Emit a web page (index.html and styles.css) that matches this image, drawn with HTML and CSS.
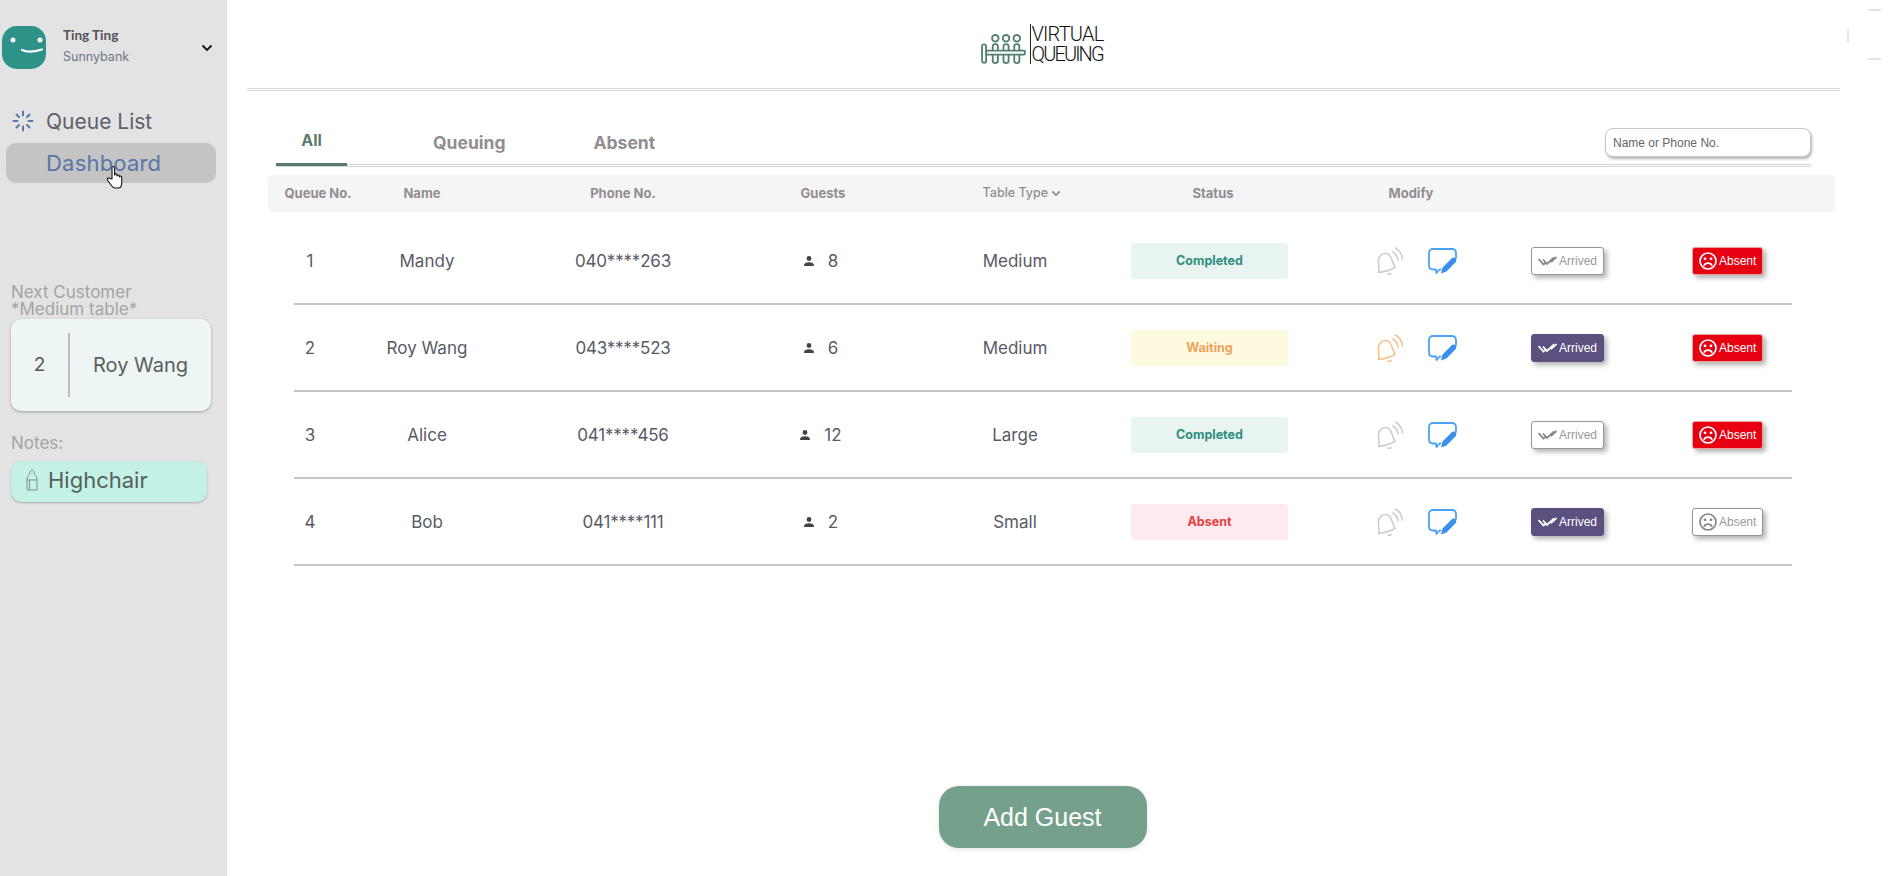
FILE: index.html
```html
<!DOCTYPE html>
<html lang="en">
<head>
    <meta charset="UTF-8">
    <title>Virtual Queuing</title>
    <link rel="stylesheet" href="styles.css">
</head>
<body>

<!-- Icons -->
<svg class="icon-defs" aria-hidden="true">
    <symbol id="i-person" viewBox="0 0 24 24">
        <path fill="currentColor" d="M12 12a4.200 4.200 0 1 0 0-8.400a4.200 4.200 0 0 0 0 8.400zm0 2.100c-2.800 0-8.400 1.400-8.400 4.200v2.100h16.800v-2.100c0-2.800-5.600-4.200-8.400-4.200z"/>
    </symbol>
    <symbol id="i-bell" viewBox="0 0 27 28">
        <g fill="none" stroke="currentColor" stroke-width="1.600" stroke-linecap="round" stroke-linejoin="round">
            <path d="M2.500 25.500C4 22 2 18 2.500 13C3 8.500 7 6 10.500 6.500C14 7 15 10 16 13C17 16 18 18 19 20.500C14 23 8 25 2.500 25.500z"/>
            <path d="M12 27c.8.600 2 .600 3-.300"/>
            <path d="M17 5c2.500 1.500 4.400 4.300 5 8"/>
            <path d="M19.500 1c3.500 2 6.300 6 7 11"/>
        </g>
    </symbol>
    <symbol id="i-chat" viewBox="0 0 29 26">
        <path fill="none" stroke="#4ba3f7" stroke-width="1.800" stroke-linejoin="round" stroke-linecap="round" d="M28 10V5c0-2.500-1.500-4-4-4H5C2.500 1 1 2.500 1 5v12.500c0 2.500 1.500 4 4 4h3l.500 3.500l3-3.500h1"/>
        <path fill="#3b8fe8" d="M13 25.500l1.500-6L23.500 10.500c1.500-1.500 3.500-1 4.300.200c.8 1.200.600 2.800-.500 3.800L18.500 23.500z"/>
    </symbol>
    <symbol id="i-check" viewBox="0 0 20 10">
        <path fill="none" stroke="currentColor" stroke-width="1.800" d="M.5 3l5 5.500l3-2.500M5 3.500l4 4.500l7-6.500M12 4l1.500 1.500l5-4.500"/>
    </symbol>
    <symbol id="i-frown" viewBox="0 0 18 18">
        <circle cx="9" cy="9" r="8" fill="none" stroke="currentColor" stroke-width="1.700"/>
        <circle cx="6" cy="6.800" r="1.400" fill="currentColor"/>
        <circle cx="12" cy="6.800" r="1.400" fill="currentColor"/>
        <path fill="none" stroke="currentColor" stroke-width="1.700" stroke-linecap="round" d="M5.200 13.200c1-2.800 6.600-2.800 7.600 0"/>
    </symbol>
</svg>

<div class="app">

    <!-- Sidebar -->
    <aside class="sidebar">
        <div class="user">
            <svg class="avatar" viewBox="0 0 44 44">
                <rect width="44" height="43" rx="15" fill="#2d9389"/>
                <circle cx="11" cy="14" r="2.500" fill="#fff"/>
                <circle cx="38" cy="14" r="2.500" fill="#fff"/>
                <path d="M20 24c4 2 12 2 20-.500" fill="none" stroke="#fff" stroke-width="2.200" stroke-linecap="round"/>
            </svg>
            <div class="user-info">
                <div class="user-name">Ting Ting</div>
                <div class="user-place">Sunnybank</div>
            </div>
            <svg class="user-arrow" viewBox="0 0 12 8"><path d="M1.500 1.500L6 6l4.500-4.500" fill="none" stroke="#111" stroke-width="1.800"/></svg>
        </div>

        <nav class="nav">
            <a class="nav-item">
                <svg class="nav-icon" viewBox="0 0 22 22">
                    <g stroke="#5b76a8" stroke-width="2" stroke-linecap="round">
                        <path d="M11 1.500v4M11 16.500v4M1.500 11h4M16.500 11h4M4.500 4.500l2.500 2.500M15 15l2.500 2.500M4.500 17.500L7 15M15 7l2.500-2.500"/>
                    </g>
                </svg>
                Queue List
            </a>
            <a class="nav-item nav-active">
                Dashboard
                <svg class="cursor" viewBox="0 0 18 25">
                    <path fill="#fff" stroke="#111" stroke-width="1.100" stroke-linejoin="round" d="M6 14V3c0-2 2.600-2 2.600 0v7c0-1.500 2.400-1.500 2.400 0v1c0-1.400 2.400-1.400 2.400 0v1c0-1.300 2.300-1.300 2.300 0v6c0 3-1.500 5-3.500 5H9c-2 0-3-1.500-4-3l-3.500-5c-1-1.500 1-2.800 2.200-1.500z"/>
                </svg>
            </a>
        </nav>

        <div class="side-label next-label">Next Customer<br>*Medium table*</div>
        <div class="next-card">
            <div class="next-num">2</div>
            <div class="next-name">Roy Wang</div>
        </div>

        <div class="side-label notes-label">Notes:</div>
        <div class="note">
            <svg class="note-icon" viewBox="0 0 12 22">
                <path d="M1 10c0-2 1-3 2.500-4.500L4 2.500L6 1l2 1.500l.5 3C10 7 11 8 11 10v11H1zM1 11h10M3.500 11v10" fill="none" stroke="#7f8f89" stroke-width="1"/>
            </svg>
            Highchair
        </div>
    </aside>

    <!-- Contenu -->
    <main class="main">
        <header class="logo-bar">
            <div class="logo">
                <svg class="logo-icon" viewBox="0 0 44 30">
                    <g fill="none" stroke="#55806f" stroke-width="1.800">
                        <circle cx="14" cy="5" r="3.200"/>
                        <circle cx="24.500" cy="5" r="3.200"/>
                        <circle cx="35" cy="5" r="3.200"/>
                        <rect x="1" y="11" width="4" height="18" rx="2"/>
                        <rect x="5" y="17" width="38" height="4" rx="1"/>
                        <path d="M11.500 17v-4c0-3 5-3 5 0v4M22 17v-4c0-3 5-3 5 0v4M32.500 17v-4c0-3 5-3 5 0v4"/>
                        <path d="M11.500 21v6c0 3 5 3 5 0v-6M22 21v6c0 3 5 3 5 0v-6M32.500 21v6c0 3 5 3 5 0v-6"/>
                    </g>
                </svg>
                <div class="logo-text">
                    <div class="logo-top">VIRTUAL</div>
                    <div class="logo-bottom">QUEUING</div>
                </div>
            </div>
        </header>
        <hr class="logo-line">

        <div class="content">
            <div class="tabs">
                <a class="tab tab-active">All</a>
                <a class="tab tab-queuing">Queuing</a>
                <a class="tab tab-absent">Absent</a>
                <input class="search" type="text" placeholder="Name or Phone No.">
            </div>

            <div class="thead">
                <div>Queue No.</div>
                <div>Name</div>
                <div>Phone No.</div>
                <div>Guests</div>
                <div class="th-type">Table Type <svg class="th-arrow" viewBox="0 0 12 8"><path d="M1.500 1.500L6 6l4.500-4.500" fill="none" stroke="#8f8b8f" stroke-width="2"/></svg></div>
                <div>Status</div>
                <div>Modify</div>
            </div>

            <div class="rows">
                <div class="row">
                    <div>1</div>
                    <div>Mandy</div>
                    <div class="phone">040****263</div>
                    <div class="guests"><svg class="person"><use href="#i-person"/></svg>8</div>
                    <div>Medium</div>
                    <div><span class="status st-completed">Completed</span></div>
                    <div class="modify"><svg class="bell"><use href="#i-bell"/></svg><svg class="chat"><use href="#i-chat"/></svg></div>
                    <div class="cell-arrived"><button class="btn"><svg class="btn-check"><use href="#i-check"/></svg>Arrived</button></div>
                    <div class="cell-absent"><button class="btn btn-red"><svg class="btn-frown"><use href="#i-frown"/></svg>Absent</button></div>
                </div>
                <div class="row">
                    <div>2</div>
                    <div>Roy Wang</div>
                    <div class="phone">043****523</div>
                    <div class="guests"><svg class="person"><use href="#i-person"/></svg>6</div>
                    <div>Medium</div>
                    <div><span class="status st-waiting">Waiting</span></div>
                    <div class="modify"><svg class="bell bell-on"><use href="#i-bell"/></svg><svg class="chat"><use href="#i-chat"/></svg></div>
                    <div class="cell-arrived"><button class="btn btn-purple"><svg class="btn-check"><use href="#i-check"/></svg>Arrived</button></div>
                    <div class="cell-absent"><button class="btn btn-red"><svg class="btn-frown"><use href="#i-frown"/></svg>Absent</button></div>
                </div>
                <div class="row">
                    <div>3</div>
                    <div>Alice</div>
                    <div class="phone">041****456</div>
                    <div class="guests"><svg class="person"><use href="#i-person"/></svg>12</div>
                    <div>Large</div>
                    <div><span class="status st-completed">Completed</span></div>
                    <div class="modify"><svg class="bell"><use href="#i-bell"/></svg><svg class="chat"><use href="#i-chat"/></svg></div>
                    <div class="cell-arrived"><button class="btn"><svg class="btn-check"><use href="#i-check"/></svg>Arrived</button></div>
                    <div class="cell-absent"><button class="btn btn-red"><svg class="btn-frown"><use href="#i-frown"/></svg>Absent</button></div>
                </div>
                <div class="row">
                    <div>4</div>
                    <div>Bob</div>
                    <div class="phone">041****111</div>
                    <div class="guests"><svg class="person"><use href="#i-person"/></svg>2</div>
                    <div>Small</div>
                    <div><span class="status st-absent">Absent</span></div>
                    <div class="modify"><svg class="bell"><use href="#i-bell"/></svg><svg class="chat"><use href="#i-chat"/></svg></div>
                    <div class="cell-arrived"><button class="btn btn-purple"><svg class="btn-check"><use href="#i-check"/></svg>Arrived</button></div>
                    <div class="cell-absent"><button class="btn"><svg class="btn-frown"><use href="#i-frown"/></svg>Absent</button></div>
                </div>
            </div>
        </div>

        <button class="add-guest">Add Guest</button>
    </main>
</div>

<!-- Traces en haut a droite -->
<svg class="corner-marks" viewBox="0 0 40 52" aria-hidden="true">
    <path d="M21 1h13M1 20v13M21 50h13" stroke="#c8c8c8" stroke-width="1" fill="none"/>
</svg>

</body>
</html>
```

FILE: styles.css
```css
body {
    margin: 0;
    font-family: 'Inter', 'Noto Sans', sans-serif;
    color: #4a4a55;
    background-color: #ffffff;
    overflow: hidden;
}

.icon-defs {
    display: none;
}

.app {
    display: flex;
    height: 876px;
}

/* Sidebar */
.sidebar {
    width: 227px;
    flex-shrink: 0;
    background-color: #e3e3e3;
    box-sizing: border-box;
    padding-top: 26px;
}

.user {
    display: flex;
    align-items: center;
    padding-left: 2px;
}

.avatar {
    width: 44px;
    height: 44px;
    flex-shrink: 0;
}

.user-info {
    margin-left: 17px;
    flex-grow: 1;
}

.user-name {
    font-family: 'Lato', sans-serif;
    font-weight: 700;
    font-size: 13.500px;
    line-height: 16px;
    color: #55525c;
    margin-top: -4px;
}

.user-place {
    font-size: 12.500px;
    line-height: 16px;
    margin-top: 6px;
    color: #6e7684;
}

.user-arrow {
    width: 12px;
    height: 8px;
    margin-right: 14px;
}

.nav {
    margin-top: 31px;
}

.nav-item {
    display: flex;
    align-items: center;
    position: relative;
    height: 40px;
    margin-left: 6px;
    width: 210px;
    padding-left: 40px;
    box-sizing: border-box;
    font-size: 21px;
    color: #5f5f6b;
}

.nav-icon {
    position: absolute;
    left: 6px;
    top: 9px;
    width: 22px;
    height: 22px;
}

.nav-active {
    margin-top: 2px;
    background-color: #c4c4c4;
    border-radius: 10px;
    font-size: 22px;
    letter-spacing: 0.200px;
    color: #5b76a8;
}

.cursor {
    position: absolute;
    left: 100px;
    top: 22px;
    width: 18px;
    height: 25px;
}

.side-label {
    margin-left: 11px;
    font-size: 17px;
    line-height: 17px;
    color: #a3a5a3;
}

.next-label {
    margin-top: 101px;
}

.next-card {
    display: flex;
    align-items: center;
    margin: 1px 0 0 11px;
    width: 200px;
    height: 92px;
    background-color: #edf5f5;
    border-radius: 10px;
    box-shadow: 0 1px 3px rgba(0, 0, 0, 0.3);
}

.next-num {
    width: 57px;
    height: 64px;
    line-height: 64px;
    border-right: 2px solid #bdbdbd;
    text-align: center;
    font-size: 19px;
    color: #555;
}

.next-name {
    flex-grow: 1;
    text-align: center;
    font-size: 20px;
    color: #5a6060;
}

.notes-label {
    margin-top: 24px;
}

.note {
    display: flex;
    align-items: center;
    margin: 9px 0 0 11px;
    width: 196px;
    height: 41px;
    padding: 0 0 3px 15px;
    box-sizing: border-box;
    background-color: #c3f1e6;
    border-radius: 10px;
    box-shadow: 0 1px 2px rgba(0, 0, 0, 0.25);
    font-size: 22px;
    color: #55605c;
}

.note-icon {
    width: 12px;
    height: 22px;
    margin-right: 10px;
}

/* Contenu */
.main {
    flex-grow: 1;
    display: flex;
    flex-direction: column;
    padding: 0 53px 28px 20px;
    box-sizing: border-box;
    min-width: 0;
}

.logo-bar {
    display: flex;
    justify-content: center;
    height: 88px;
    box-sizing: border-box;
    padding-top: 25px;
}

.logo {
    display: flex;
    align-items: center;
    height: 38px;
    margin-right: 3px;
}

.logo-icon {
    width: 45px;
    height: 31px;
    margin-top: 8px;
}

.logo-text {
    margin-left: 4px;
    padding-left: 1px;
    border-left: 1.500px solid #222;
    font-family: 'Roboto', sans-serif;
    font-weight: 300;
    font-size: 20px;
    line-height: 20px;
    color: #111;
}

.logo-top {
    letter-spacing: -0.800px;
}

.logo-bottom {
    letter-spacing: -1.900px;
}

.logo-line {
    margin: 0;
    height: 1px;
    border: 0;
    border-top: 1px solid #d8d8d8;
    border-bottom: 1px solid #d8d8d8;
}

.content {
    flex-grow: 1;
    margin-left: 21px;
    margin-right: 5px;
}

.tabs {
    display: flex;
    align-items: center;
    position: relative;
    height: 73px;
    margin: 0 24px 0 8px;
    border-bottom: 3px double #d4d4d4;
    box-sizing: content-box;
}

.tab {
    font-weight: 700;
    font-size: 17.500px;
    color: #918d91;
    margin-top: 30px;
}

.tab-active {
    width: 71px;
    text-align: center;
    font-size: 16px;
    color: #5b7a70;
    margin-top: 29px;
    height: 44px;
    line-height: 36px;
    box-sizing: border-box;
    border-bottom: 3px solid #5a7a70;
    margin-bottom: -3px;
}

.tab-queuing {
    margin-left: 86px;
}

.tab-absent {
    margin-left: 88px;
}

.search {
    position: absolute;
    right: 0;
    top: 37px;
    width: 206px;
    height: 29px;
    box-sizing: border-box;
    border: 1px solid #c8c8c8;
    border-radius: 8px;
    box-shadow: 1px 2px 3px rgba(0, 0, 0, 0.3);
    padding: 0 7px;
    font-family: 'Liberation Sans', sans-serif;
    font-size: 12px;
    outline: none;
}

.search::placeholder {
    color: #666;
}

.thead {
    display: grid;
    grid-template-columns: 100px 108px 294px 106px 292px 90px 306px 1fr;
    align-items: center;
    height: 37px;
    margin-top: 8px;
    padding-bottom: 2px;
    box-sizing: border-box;
    background-color: #f5f5f5;
    border-radius: 5px;
    font-weight: 700;
    font-size: 13px;
    color: #918d91;
    text-align: center;
}

.th-type {
    font-weight: 500;
    font-size: 12.500px;
}

.th-arrow {
    width: 10px;
    height: 7px;
}

.rows {
    margin: 6px 43px 0 26px;
}

.row {
    display: grid;
    grid-template-columns: 32px 202px 190px 214px 166px 226px 176px 140px 152px;
    align-items: center;
    height: 87px;
    box-sizing: border-box;
    border-bottom: 2px solid #c4c4c4;
    font-size: 17px;
    color: #5a5a66;
    text-align: center;
}

.phone {
    letter-spacing: -0.200px;
}

.guests {
    display: flex;
    align-items: center;
    justify-content: center;
    padding-right: 10px;
    box-sizing: border-box;
}

.person {
    width: 14px;
    height: 14px;
    margin-right: 12px;
    color: #444;
}

.status {
    display: block;
    width: 157px;
    height: 36px;
    line-height: 36px;
    margin-left: 33px;
    border-radius: 3px;
    font-weight: 700;
    font-size: 12.500px;
}

.st-completed {
    background-color: #e8f4f0;
    color: #2f8f7f;
}

.st-waiting {
    background-color: #fefae0;
    color: #f0a35a;
}

.st-absent {
    background-color: #fdeaf0;
    color: #e5403f;
}

.modify {
    display: flex;
    align-items: center;
    padding-left: 52px;
}

.bell {
    width: 27px;
    height: 28px;
    color: #cdcdcd;
}

.bell-on {
    color: #f3c48a;
}

.chat {
    width: 29px;
    height: 26px;
    margin-left: 25px;
}

.cell-arrived {
    text-align: left;
    padding-left: 31px;
}

.cell-absent {
    text-align: left;
    padding-left: 52px;
}

.btn {
    display: inline-flex;
    align-items: center;
    height: 28px;
    padding: 0 6px;
    background-color: #ffffff;
    border: 1px solid #9a939a;
    border-radius: 3px;
    box-shadow: 3px 3px 5px rgba(0, 0, 0, 0.3);
    font-family: 'Liberation Sans', sans-serif;
    font-size: 12px;
    color: #999;
}

.btn-check {
    width: 20px;
    height: 10px;
    margin-right: 1px;
    color: #888;
}

.btn-frown {
    width: 18px;
    height: 18px;
    margin-right: 2px;
    color: #8a858a;
}

.btn-purple {
    background-color: #5c5080;
    border-color: #5c5080;
    color: #ffffff;
}

.btn-purple .btn-check {
    color: #ffffff;
}

.btn-red {
    background-color: #e60012;
    border-color: #e8a0a0;
    color: #ffffff;
}

.btn-red .btn-frown {
    color: #ffffff;
}

.add-guest {
    align-self: center;
    width: 208px;
    height: 62px;
    flex-shrink: 0;
    margin-right: 2px;
    background-color: #75a18c;
    color: #ffffff;
    border: none;
    border-radius: 20px;
    box-shadow: 0 1px 5px rgba(0, 0, 0, 0.12);
    font-family: 'Liberation Sans', sans-serif;
    font-size: 25px;
}

.corner-marks {
    position: absolute;
    top: 9px;
    width: 40px;
    height: 52px;
    right: 6px;
}
```
